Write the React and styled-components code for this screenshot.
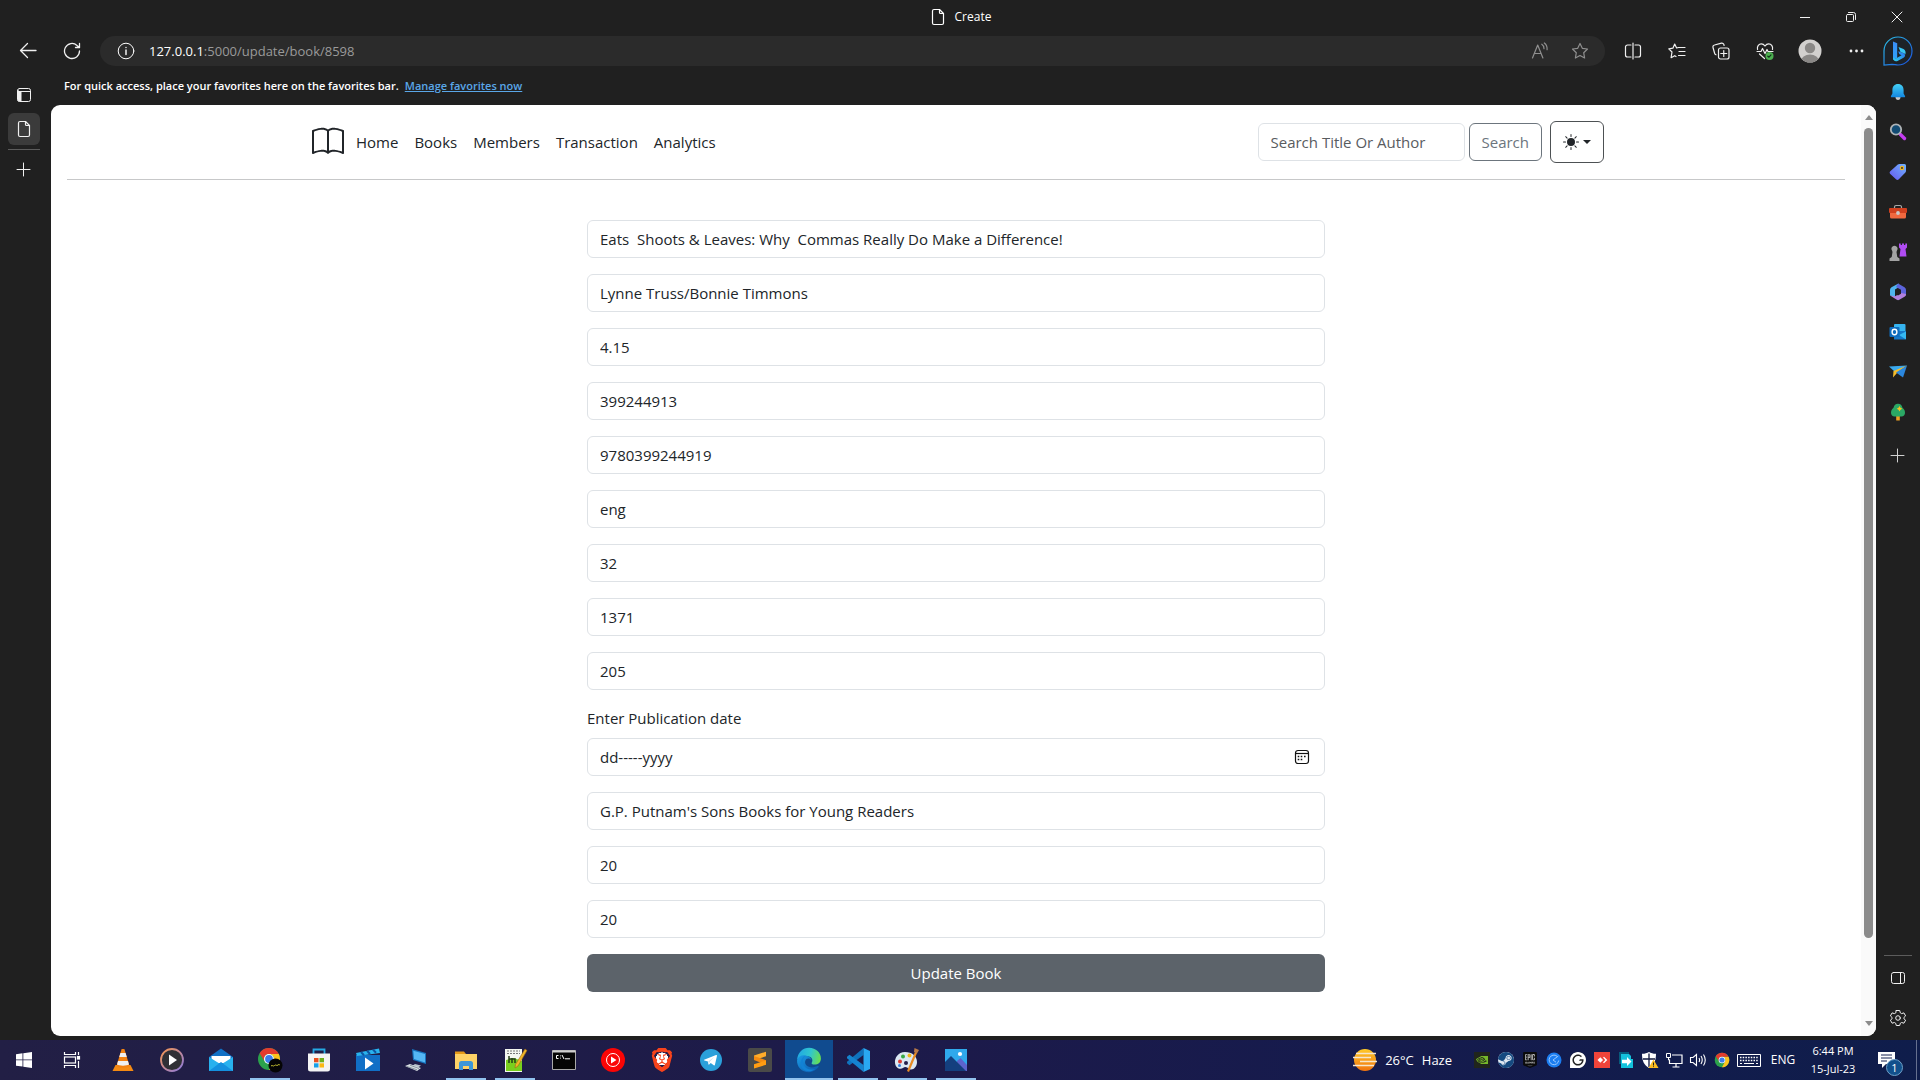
import React from "react";
import styled, { createGlobalStyle, css } from "styled-components";
import { BsBook, BsSunFill } from "react-icons/bs";
import { SiBrave, SiEpicgames, SiGrammarly, SiNvidia, SiSteam } from "react-icons/si";

const uiFont = `"Open Sans", "Noto Sans", sans-serif`;

const GlobalStyle = createGlobalStyle`
  *, *::before, *::after { box-sizing: border-box; }
  body { margin: 0; background: #202020; font-family: ${uiFont}; }
  button, input { font-family: inherit; }
  svg { display: block; flex: none; }
`;

/* ---------- browser frame ---------- */

const Desktop = styled.div`
  display: flex;
  flex-direction: column;
  min-height: 100vh;
  background: #202020;
  color: #fff;
`;

const TitleBar = styled.header`
  display: grid;
  grid-template-columns: 1fr auto 1fr;
  align-items: center;
  height: 33px;
`;

const PageTitle = styled.div`
  grid-column: 2;
  display: flex;
  align-items: center;
  gap: 8px;
  font-size: 12px;
  line-height: 16px;
`;

const WindowControls = styled.div`
  display: flex;
  justify-content: flex-end;
`;

const IconButton = styled.button`
  display: flex;
  align-items: center;
  justify-content: center;
  flex: none;
  width: ${(p) => p.$w || 44}px;
  height: ${(p) => p.$h || 32}px;
  padding: 0;
  border: 0;
  border-radius: 6px;
  background: ${(p) => (p.$active ? "#3b3b3b" : "transparent")};
  color: ${(p) => p.$tone || "#f0f0f0"};
`;

const Toolbar = styled.nav`
  display: flex;
  align-items: center;
  height: 36px;
  padding: 0 3px 0 6px;
`;

const AddressBar = styled.div`
  display: flex;
  align-items: center;
  flex: 1;
  min-width: 0;
  height: 30px;
  margin: 0 6px;
  padding: 0 5px 0 17px;
  border-radius: 15px;
  background: #2b2b2b;
`;

const Address = styled.div`
  flex: 1;
  margin-left: 14px;
  font-size: 13px;
  line-height: 20px;
  color: #9a9a9a;
  outline: 0;
`;

const Host = styled.span`
  color: #fff;
`;

const BrowserBody = styled.div`
  display: grid;
  grid-template-columns: 51px minmax(0, 1fr) 44px;
  flex: 1;
`;

const TabRail = styled.aside`
  display: flex;
  flex-direction: column;
  padding: 10px 11px 0 8px;
`;

const ActiveTab = styled(IconButton)`
  margin-top: 2px;
`;

const RailRule = styled.hr`
  width: ${(p) => p.$w}px;
  height: 1px;
  margin: ${(p) => p.$m};
  border: 0;
  background: #5c5c5c;
`;

const Center = styled.div`
  display: flex;
  flex-direction: column;
  padding-bottom: 4px;
`;

const FavoritesBar = styled.div`
  display: flex;
  align-items: center;
  gap: 6px;
  height: 36px;
  padding: 0 0 2px 13px;
  font-size: 11px;
  font-weight: 600;
  line-height: 16px;
`;

const FavoritesLink = styled.a`
  color: #5aa7e8;
  text-decoration: underline;
`;

const SideBar = styled.aside`
  display: flex;
  flex-direction: column;
  align-items: center;
  padding: 3px 0 2px;
`;

const SideBottom = styled.div`
  display: flex;
  flex-direction: column;
  align-items: center;
  margin-top: auto;
`;

/* ---------- web page ---------- */

const Viewport = styled.div`
  display: flex;
  flex: 1;
  overflow: hidden;
  border-radius: 9px;
  background: #fff;
  color: #212529;
`;

const Page = styled.main`
  flex: 1;
  min-width: 0;
  padding: 16px 16px 0;
  font-size: 15px;
  line-height: 24px;
`;

const NavContainer = styled.div`
  display: flex;
  align-items: center;
  max-width: 1320px;
  margin: 0 auto;
  padding: 0 12px 0 16px;
`;

const Brand = styled.a`
  margin-right: 4px;
  color: #212529;
`;

const NavLink = styled.a`
  padding: 8px;
  color: #212529;
  text-decoration: none;
`;

const SearchForm = styled.form`
  display: flex;
  gap: 4px;
  margin: 0 8px 0 auto;
`;

const field = css`
  height: 38px;
  padding: 6px 12px;
  border: 1px solid #dee2e6;
  border-radius: 6px;
  background: #fff;
  color: #212529;
  font-size: 15px;
  line-height: 24px;
`;

const SearchInput = styled.input`
  ${field}
  width: 207px;
  &::placeholder { color: #595c5f; opacity: 1; }
`;

const OutlineButton = styled.button`
  height: 38px;
  padding: 0 12px;
  border: 1px solid #6c757d;
  border-radius: 6px;
  background: #fff;
  color: #6c757d;
  font-size: 15px;
  line-height: 24px;
`;

const ThemeButton = styled.button`
  display: flex;
  align-items: center;
  justify-content: center;
  gap: 4px;
  width: 54px;
  height: 42px;
  padding: 0;
  border: 1px solid #4d5154;
  border-radius: 6px;
  background: #fff;
  color: #212529;
`;

const Caret = styled.span`
  border: 4px solid transparent;
  border-top-color: #212529;
  border-bottom: 0;
`;

const PageRule = styled.hr`
  height: 1px;
  margin: 16px 0 40px;
  border: 0;
  background: #c7c8c9;
`;

const BookForm = styled.form`
  display: flex;
  flex-direction: column;
  gap: 16px;
  max-width: 738px;
  margin: 0 auto;
`;

const TextField = styled.input`
  ${field}
  width: 100%;
`;

const DateGroup = styled.div`
  display: flex;
  flex-direction: column;
  gap: 8px;
`;

const DateBox = styled.div`
  ${field}
  display: flex;
  align-items: center;
  justify-content: space-between;
`;

const DateInput = styled.input`
  flex: 1;
  padding: 0;
  border: 0;
  outline: 0;
  background: none;
  color: #212529;
  font-size: 15px;
  line-height: 24px;
`;

const SubmitButton = styled.button`
  height: 38px;
  border: 0;
  border-radius: 6px;
  background: #5c636a;
  color: #fff;
  font-size: 15px;
  line-height: 24px;
`;

const ScrollTrack = styled.div`
  display: flex;
  flex-direction: column;
  align-items: center;
  width: 15px;
  padding: 10px 0;
  background: #fafafa;
`;

const ScrollArrow = styled.span`
  border: 4px solid transparent;
  ${(p) =>
    p.$up
      ? css`border-top: 0; border-bottom: 5px solid #8b8b8b;`
      : css`border-bottom: 0; border-top: 5px solid #8b8b8b;`}
`;

const ScrollLane = styled.div`
  display: flex;
  flex: 1;
  flex-direction: column;
  margin: 8px 0 9px;
  &::after { content: ""; flex: 1; }
`;

const ScrollThumb = styled.div`
  flex: 11;
  width: 9px;
  border-radius: 5px;
  background: #8b8b8b;
`;

/* ---------- taskbar ---------- */

const TaskBar = styled.footer`
  display: flex;
  height: 40px;
  background: linear-gradient(90deg, #221f45 0%, #1c1a4a 50%, #151b4d 72%, #0f1d4b 100%);
`;

const AppRow = styled.div`
  display: flex;
  gap: 1px;
  margin-left: 3px;
`;

const TaskButton = styled.button`
  display: flex;
  align-items: center;
  justify-content: center;
  position: relative;
  width: 48px;
  height: 40px;
  padding: 0;
  border: 0;
  background: ${(p) => (p.$active ? "#104b8f" : "transparent")};
  &::after {
    content: "";
    display: ${(p) => (p.$running || p.$active ? "block" : "none")};
    position: absolute;
    bottom: 0;
    left: ${(p) => (p.$active ? 0 : 4)}px;
    right: ${(p) => (p.$active ? 0 : 4)}px;
    height: 2px;
    background: #92c3ee;
  }
`;

const Tray = styled.div`
  display: flex;
  align-items: center;
  margin-left: auto;
  font-size: 13px;
  line-height: 18px;
`;

const Weather = styled.div`
  display: flex;
  align-items: center;
  gap: 8px;
  margin-right: 18px;
`;

const TrayIcons = styled.div`
  display: flex;
  align-items: center;
`;

const TraySlot = styled.span`
  display: flex;
  justify-content: center;
  width: ${(p) => p.$w || 24}px;
`;

const Language = styled.span`
  width: 38px;
  font-size: 12px;
  text-align: center;
`;

const Clock = styled.div`
  width: 62px;
  font-size: 11px;
  text-align: center;
`;

const Notifications = styled.div`
  position: relative;
  margin: 0 21px 0 14px;
`;

const Badge = styled.span`
  position: absolute;
  top: 7px;
  left: 8px;
  width: 17px;
  height: 17px;
  border: 1px solid #6fa0c8;
  border-radius: 50%;
  background: #11508c;
  font-size: 11px;
  line-height: 15px;
  text-align: center;
`;

const ShowDesktop = styled.div`
  width: 4px;
  height: 40px;
  border-left: 1px solid #66708f;
`;

/* ---------- line icons ---------- */

function Line({ s = 16, w = 1, box = 16, children }) {
  return (
    <svg width={s} height={s} viewBox={`0 0 ${box} ${box}`} fill="none" stroke="currentColor" strokeWidth={w} strokeLinecap="round" strokeLinejoin="round">
      {children}
    </svg>
  );
}

const DocIcon = () => (
  <Line s={18} box={18} w={1.2}>
    <path d="M5 1.5h5.5l4 4V15a1.5 1.5 0 0 1-1.500 1.500H5A1.500 1.500 0 0 1 3.500 15V3A1.500 1.500 0 0 1 5 1.500z" />
    <path d="M10.500 1.500v3a1 1 0 0 0 1 1h3" />
  </Line>
);
const BackIcon = () => <Line s={18} box={18} w={1.3}><path d="M17 8.500H1.500M8.500 1.500l-7 7 7 7" /></Line>;
const ReloadIcon = () => (
  <Line s={18} box={18} w={1.3}>
    <path d="M16.500 9A7.500 7.500 0 1 1 14 3.400L16.500 5.500M16.500 1.500v4h-4" />
  </Line>
);
const InfoIcon = () => (
  <Line s={18} box={18}>
    <circle cx="9" cy="9" r="7.800" />
    <path d="M9 8v4.500M9 5.400v.2" strokeWidth="1.400" />
  </Line>
);
const ReadAloudIcon = () => (
  <Line s={18} box={18} w={1.2}>
    <path d="M1.500 16L6.700 3l5.200 13M3.300 11.500h6.800M10.800 2.200c1.600 1 2.300 2.500 2.200 4.500M13.300 1c2.200 1.600 3 3.800 2.800 6.700" />
  </Line>
);
const StarIcon = () => (
  <Line s={18} box={18} w={1.2}>
    <path d="M9 1.500l2.300 4.800 5.200.7-3.800 3.700.9 5.300L9 13.500 4.400 16l.9-5.300L1.500 7l5.200-.7z" />
  </Line>
);
const SplitIcon = () => (
  <Line s={18} box={18} w={1.2}>
    <path d="M7 3H3.500A2 2 0 0 0 1.500 5v8a2 2 0 0 0 2 2H7M11 3h3.500a2 2 0 0 1 2 2v8a2 2 0 0 1-2 2H11M9 1v16" />
  </Line>
);
const FavoritesIcon = () => (
  <Line s={18} box={18} w={1.2}>
    <path d="M10.500 5.500L8.600 6 6.700 2 4.900 6.200.8 6.800 4 10l-.9 5.700 3.600-2 1.300.8M10.500 5.500H17M11 9.500h6M10.500 13.500H17" />
  </Line>
);
const CollectionsIcon = () => (
  <Line s={18} box={18} w={1.2}>
    <rect x="6.500" y="6" width="10.500" height="11" rx="2" />
    <path d="M11.750 8.500v6M8.750 11.500h6M4 12.800A2 2 0 0 1 2.700 11.500L1 5.500A2 2 0 0 1 2.500 3L9.500 1.200a2 2 0 0 1 2.400 1.500L12.100 3.500" />
  </Line>
);
const HeartIcon = () => (
  <Line s={18} box={18} w={1.2}>
    <path d="M1.500 7.500C.8 4 3 1.800 5.300 1.800 7.300 1.800 8.300 3 9 4c.7-1 1.700-2.200 3.700-2.200 2.300 0 4.500 2.200 3.800 5.700M1 9.500h4l1.500-3 2.500 5 2-4 1 2h5M3.500 12L8.500 16.500" />
    <circle cx="13.500" cy="14" r="4" fill="#4caf50" stroke="none" />
    <path d="M11.800 14.200l1.200 1 2-2.300" stroke="#12351a" />
  </Line>
);
const AvatarIcon = () => (
  <svg width="24" height="24" viewBox="0 0 24 24">
    <defs><clipPath id="avatarClip"><circle cx="12" cy="12" r="11.500" /></clipPath></defs>
    <circle cx="12" cy="12" r="11.500" fill="#d2d0ce" />
    <g clipPath="url(#avatarClip)" fill="#8a8886">
      <circle cx="12" cy="9" r="5.200" />
      <ellipse cx="12" cy="22" rx="9" ry="6.500" />
    </g>
  </svg>
);
const DotsIcon = () => (
  <svg width="16" height="16" fill="currentColor"><circle cx="3" cy="8" r="1.400" /><circle cx="8.500" cy="8" r="1.400" /><circle cx="14" cy="8" r="1.400" /></svg>
);
const BingIcon = () => (
  <svg width="30" height="30" viewBox="0 0 30 30">
    <defs>
      <linearGradient id="bingRing" x1="0" y1="0" x2="1" y2="1"><stop offset="0" stopColor="#2cc3e8" /><stop offset="1" stopColor="#1a50e0" /></linearGradient>
      <linearGradient id="bingStem" x1="0" y1="0" x2="0" y2="1"><stop offset="0" stopColor="#3a8cf5" /><stop offset="1" stopColor="#2ea3fa" /></linearGradient>
      <linearGradient id="bingTail" x1="0" y1="1" x2="1" y2="0"><stop offset="0" stopColor="#2fd3ee" /><stop offset="1" stopColor="#286ef0" /></linearGradient>
    </defs>
    <path d="M1 29V15a14 14 0 1 1 14 14c-2 0-4-.6-6-.6L1 29z" fill="#1d2228" stroke="url(#bingRing)" strokeWidth="1.200" />
    <path d="M10 5.500l4.200 1.700v14.500L10 24z" fill="url(#bingStem)" />
    <path d="M10 21.500c1.500 1.500 3 1 4.200.2l4.300-2.500-2.300-1.200-1-2.800 5 1.800c2.600 1 2.300 3.600.3 4.800L14.500 25c-2.500 1-4.500-.6-4.500-3.500z" fill="url(#bingTail)" />
    <path d="M15.500 11l5 2c2 1 2.600 3.500 1.800 5.500-.5-.8-1.200-1.300-2-1.600L17.500 16z" fill="#38c6f4" />
  </svg>
);
const PanelTabsIcon = () => (
  <Line>
    <rect x="1.500" y="1.500" width="13" height="13" rx="2" />
    <path d="M1.500 4.500h13" />
    <path d="M2 3.500v9.500a1 1 0 0 0 1 1h2V4.500H2z" fill="currentColor" />
  </Line>
);
const PlusIcon = () => <Line><path d="M7.500 1v13M1 7.500h13" /></Line>;
const SidePanelIcon = () => <Line><rect x="1.500" y="2.500" width="13" height="11" rx="2" /><path d="M10.500 2.500v11" /></Line>;
const GearIcon = () => (
  <Line s={18} box={18}>
    <path d="M7.300 1.500h3.400l.6 2.300 1.300.8 2.300-.7 1.700 3-1.700 1.600v1.200l1.700 1.500-1.700 3-2.300-.7-1.300.8-.6 2.200H7.300l-.6-2.200-1.300-.8-2.300.7-1.700-3 1.700-1.500V8.500L1.400 6.900l1.700-3 2.300.7 1.300-.8z" />
    <circle cx="9" cy="9" r="2.300" />
  </Line>
);
const MinimizeIcon = () => <Line s={10} box={10}><path d="M0 5.500h10" /></Line>;
const RestoreIcon = () => <Line s={12} box={12}><rect x="1.500" y="3.500" width="7" height="7" rx="1" /><path d="M3.500 1.500H8.500a2 2 0 0 1 2 2V8.500" /></Line>;
const CloseIcon = () => <Line s={12} box={12}><path d="M1 1l10 10M11 1L1 11" /></Line>;
const CalendarIcon = () => (
  <svg width="16" height="16" viewBox="0 0 16 16" fill="none" stroke="#111" strokeWidth="1.200">
    <rect x="1.500" y="1.500" width="13" height="13" rx="2.500" />
    <path d="M1.500 4.500h13" />
    <path d="M6.700 7.500h1.600M10 7.500h1.600M3.700 7.500h1.600M3.700 10.500h1.600M6.700 10.500h1.600" strokeWidth="1.600" />
  </svg>
);

/* ---------- sidebar icons ---------- */

const Art = ({ s = 18, box = 18, children }) => <svg width={s} height={s} viewBox={`0 0 ${box} ${box}`}>{children}</svg>;

const Bell = () => (
  <Art>
    <defs><linearGradient id="bellBody" x1="0" y1="0" x2="0" y2="1"><stop offset="0" stopColor="#45d0f5" /><stop offset="1" stopColor="#1286e0" /></linearGradient></defs>
    <path d="M6.500 14h5c0 2-1 3-2.500 3s-2.500-1-2.500-3z" fill="#c9c9c9" />
    <path d="M9 1c3.500 0 5.600 2.500 5.600 6v3.500L16 13c.3.800 0 1.300-.8 1.300H2.800C2 14.300 1.700 13.800 2 13l1.400-2.500V7C3.400 3.500 5.500 1 9 1z" fill="url(#bellBody)" />
  </Art>
);
const Magnifier = () => (
  <Art>
    <path d="M11.500 11.500l4 4" stroke="#c43cf0" strokeWidth="3.400" strokeLinecap="round" />
    <circle cx="7" cy="6.500" r="5.200" fill="#124b73" stroke="#aeb3b6" strokeWidth="1.800" />
  </Art>
);
const Tag = () => (
  <Art>
    <defs><linearGradient id="tagBody" x1="1" y1="0" x2="0" y2="1"><stop offset="0" stopColor="#6fb3ff" /><stop offset="1" stopColor="#6657ee" /></linearGradient></defs>
    <path d="M10.500 1H15.500A1.500 1.500 0 0 1 17 2.500V8a2 2 0 0 1-.6 1.400L9.800 16.300a2 2 0 0 1-2.800 0L1.300 11a2 2 0 0 1 0-2.800L8.800 1.600A2.500 2.500 0 0 1 10.500 1z" fill="url(#tagBody)" />
    <circle cx="13" cy="5" r="1.600" fill="#343434" stroke="#f5b91c" strokeWidth="1.200" />
  </Art>
);
const Toolbox = () => (
  <Art>
    <path d="M5.500 5.500V4A1.500 1.500 0 0 1 7 2.500h4A1.500 1.500 0 0 1 12.500 4v1.500" fill="none" stroke="#a8a8a8" strokeWidth="1.200" />
    <rect x="0" y="5" width="18" height="5" rx="1" fill="#d0401f" />
    <path d="M1 10h16v4a1.500 1.500 0 0 1-1.500 1.500h-13A1.500 1.500 0 0 1 1 14z" fill="#f0683f" />
    <circle cx="9" cy="10" r="1.900" fill="#c8c8c8" />
  </Art>
);
const Chess = () => (
  <Art>
    <path d="M10 .5h1.700V2h1.300V.5h2V2h1.300V.5H18v4L16.500 6l1 7.500h-7l1-7.500L10 4.500z" fill="#b04cf2" />
    <path d="M3 7.500a3 3 0 1 1 5 0L7.500 9l.8 5 2.200 1.500V18H.5v-2.500L2.700 14l.8-5z" fill="#a3a3a3" />
  </Art>
);
const Office = () => (
  <Art>
    <path d="M9.500.500L2.500 4.300A3 3 0 0 0 1 7v5.500l5 1.500V6.500l5-3z" fill="#4fb4ee" />
    <path d="M9 .500L15.500 4.300A3 3 0 0 1 17 7v5.500L12 11V6.800L7 4z" fill="#5c64dc" />
    <path d="M1 12.500l6.800 4.300a2.500 2.500 0 0 0 2.500 0l5.200-3.100c1-.6 1.500-1.200 1.500-2.700l-5-1-6 3.300z" fill="#b180de" />
    <path d="M9 5.700l3 1.700v3.400L9 12.500l-3-1.700V7.400z" fill="#202020" />
  </Art>
);
const Outlook = () => (
  <Art>
    <rect x="5" y="1" width="11.500" height="10" rx="1" fill="#36b4f0" />
    <path d="M5 8h12v7.500a1 1 0 0 1-1 1H5z" fill="#1477c8" />
    <path d="M17 8.500v8L10 12z" fill="#35b8f1" />
    <rect x="0.500" y="4" width="10" height="10" rx="1" fill="#0f6cbd" />
    <ellipse cx="5.500" cy="9" rx="2.400" ry="2.700" fill="none" stroke="#fff" strokeWidth="1.400" />
  </Art>
);
const Plane = () => (
  <Art>
    <path d="M0 3.500l18-1L6 9z" fill="#3aa9ee" />
    <path d="M18 2.500L4.500 8 4 14.500 8 10z" fill="#f5bd2c" />
    <path d="M18 2.500L7 9.500l7 5z" fill="#2b87de" />
  </Art>
);
const Tree = () => (
  <Art>
    <rect x="7.200" y="12" width="3.600" height="5.500" rx="0.500" fill="#eda022" />
    <path d="M9 .800c2.500 0 3.800 1.500 4.500 4C15.500 6.500 16 8 16 10c0 2-1.500 3.400-3.500 3.400h-7C3.500 13.400 2 12 2 10c0-2 .5-3.500 2.500-5.200.7-2.500 2-4 4.500-4z" fill="#2ba865" />
    <path d="M10.500 3l1 1.700 1.800 1-1.800 1-1 1.800-1-1.800-1.800-1 1.800-1z" fill="#f7c325" />
  </Art>
);

/* ---------- taskbar icons ---------- */

const Start = () => (
  <svg width="16" height="16" viewBox="0 0 16 16" fill="#fff">
    <path d="M0 2.200l6.500-.9v6.200H0zM7.300 1.200L16 0v7.500H7.300zM0 8.300h6.500v6.300L0 13.700zM7.300 8.300H16V16l-8.700-1.200z" />
  </svg>
);
const TaskView = () => (
  <svg width="18" height="18" viewBox="0 0 18 18" fill="none" stroke="#fff" strokeWidth="1.200">
    <path d="M1.500 1v2.500h11V1M1.500 17v-2.500h11V17M15.500 1v3M15.500 10v7" />
    <rect x="1.500" y="6" width="11" height="6" />
    <rect x="14.500" y="5.500" width="2" height="2.500" fill="#fff" />
  </svg>
);
const Vlc = () => (
  <Art s={24} box={24}>
    <path d="M4.500 17h15l3 6h-21z" fill="#f58a12" />
    <path d="M10.600 1h2.800l5.100 17c-2 2.200-11 2.200-13 0z" fill="#f28111" />
    <path d="M9.400 5h5.200l1.200 4H8.200zM7 13h10l1 3.500c-2 1.500-10 1.500-12 0z" fill="#efefef" />
  </Art>
);
const MediaPlayer = () => (
  <Art s={24} box={24}>
    <defs><linearGradient id="playRing" x1="0" y1="0" x2="1" y2="1"><stop offset="0" stopColor="#f6964f" /><stop offset="1" stopColor="#8b7be0" /></linearGradient></defs>
    <circle cx="12" cy="12" r="11" fill="#303035" stroke="url(#playRing)" strokeWidth="1.800" />
    <path d="M9 6.500l8 5.500-8 5.500z" fill="#fff" />
  </Art>
);
const Mail = () => (
  <Art s={24} box={24}>
    <path d="M0 9L12 .500 24 9v14H0z" fill="#1170c5" />
    <path d="M2.500 8h19v7h-19z" fill="#fff" />
    <path d="M0 9l12 7.500L24 9v14H0z" fill="#28b1ee" />
    <path d="M0 23L12 14l12 9z" fill="#1490df" />
  </Art>
);
const ChromeMark = () => (
  <>
    <circle cx="24" cy="24" r="22" fill="#2ba24c" />
    <path d="M24 14H43.600A22 22 0 0 1 24 46L32.700 29A10 10 0 0 0 24 14z" fill="#fcc31e" />
    <path d="M24 14H43.600A22 22 0 0 0 5.200 12.500L15.300 29A10 10 0 0 1 24 14z" fill="#e33b2e" />
    <circle cx="24" cy="24" r="10" fill="#fff" />
    <circle cx="24" cy="24" r="7.800" fill="#3b7ded" />
  </>
);
const Chrome = () => (
  <Art s={26} box={52}>
    <ChromeMark />
    <circle cx="37" cy="37" r="14" fill="#050505" />
    <path d="M28 38c3-3 4 2 7-1s4 2 7-1 3 1 4 0" fill="none" stroke="#c7c332" strokeWidth="2" />
  </Art>
);
const ChromeSmall = () => <Art s={16} box={48}><ChromeMark /></Art>;
const Store = () => (
  <Art s={24} box={24}>
    <path d="M6.500 7V1.500h11V7" fill="none" stroke="#25a9e3" strokeWidth="1.800" />
    <path d="M1 5.500h22V21a2.500 2.500 0 0 1-2.500 2.500h-17A2.500 2.500 0 0 1 1 21z" fill="#f4f4f4" />
    <path d="M7 10h4.500v4.300H7z" fill="#e8501f" /><path d="M12.500 10H17v4.300h-4.500z" fill="#6fb01c" />
    <path d="M7 15.300h4.500v4.200H7z" fill="#16a0e8" /><path d="M12.500 15.300H17v4.200h-4.500z" fill="#fab813" />
  </Art>
);
const Movies = () => (
  <Art s={24} box={24}>
    <path d="M0 7h24v16H0z" fill="#116fc6" />
    <path d="M0 5l23-4.500 1 4.500L1 8z" fill="#29b3ee" />
    <path d="M5 4l3 3.200M11 2.800l3 3.200M17 1.600l3 3.200" stroke="#0d55a3" strokeWidth="2" />
    <path d="M9 9.500l8.500 6L9 21.500z" fill="#fff" />
  </Art>
);
const Computer = () => (
  <Art s={24} box={24}>
    <path d="M7 1l14 4v11L8 12z" fill="#1773bd" /><path d="M8.300 2.700L20 6v8.500L9 11z" fill="#54b7f4" />
    <path d="M10 16l6 1.500-3 2-6-1.500z" fill="#b7c2ca" /><path d="M0 18l5-2 11 4-4 3z" fill="#d9dfe3" />
    <path d="M2 18.500l10 3.300M5 17.200l9 3.300" stroke="#74828d" strokeWidth="0.800" />
  </Art>
);
const Explorer = () => (
  <Art s={24} box={24}>
    <path d="M1 3.500h9l2 2.500H1z" fill="#e59a18" /><path d="M1 6h22v15H1z" fill="#fdd266" />
    <path d="M5 22v-6.500A2.500 2.500 0 0 1 7.500 13h9a2.500 2.500 0 0 1 2.500 2.500V22h-4v-4H9v4z" fill="#3c96d8" />
  </Art>
);
const Notepad = () => (
  <Art s={26} box={26}>
    <path d="M3 2h17v23H3z" fill="#f4f7f0" /><path d="M4 13l8-2 8 3v10H4z" fill="#79cf1d" />
    <path d="M5 4h13M5 6.500h13" stroke="#777" strokeDasharray="2 1" /><path d="M7 9v7M10 11v5M7 12h6v4" stroke="#243f16" strokeWidth="1.500" fill="none" />
    <path d="M23 2l2 1.500L16 19l-3 2 .5-3.500z" fill="#efb528" stroke="#9c6a18" strokeWidth="0.600" />
  </Art>
);
const Terminal = () => (
  <Art s={24} box={24}>
    <path d="M.500 2.500h23v19H.500z" fill="#050505" stroke="#a9a9a9" /><path d="M.500 2.500h23v2H.500z" fill="#cfcfcf" />
    <path d="M6.500 7.500H4.500v3h2M8.500 7.500v.8M8.500 9.700v.8M10 7l2 4M13 10.800h5" stroke="#fff" fill="none" />
  </Art>
);
const YtMusic = () => (
  <Art s={24} box={24}>
    <circle cx="12" cy="12" r="12" fill="#fa0505" /><circle cx="12" cy="12" r="6.500" fill="none" stroke="#fff" />
    <path d="M10 8.500l5.500 3.500-5.500 3.500z" fill="#fff" />
  </Art>
);
const BraveStack = styled.span`
  display: flex;
  background: radial-gradient(circle at 50% 45%, #fff 0 35%, transparent 36%);
`;
const Brave = () => <BraveStack><SiBrave size={24} color="#f8431b" /></BraveStack>;
const Telegram = () => (
  <Art s={22} box={24}>
    <circle cx="12" cy="12" r="12" fill="#2ba0da" /><path d="M4.500 11.800l13-5.300c.8-.3 1.200.2 1 1l-2.200 9.800c-.2.700-.7.900-1.300.5l-3.300-2.400-1.700 1.600c-.4.300-.7.200-.8-.3l-.6-3.200-3.800-.9c-.7-.2-.8-.6-.3-.8z" fill="#fff" />
    <path d="M9 13.500l6.500-4.800-5 5.200-.5 2.500z" fill="#c3ddec" />
  </Art>
);
const Sublime = () => (
  <Art s={24} box={24}>
    <rect width="24" height="24" rx="2" fill="#4a4a48" /><path d="M6 7.500l12-3.800v4.600L6 12z" fill="#ffad2a" /><path d="M6 8l12 4.300v4.500L6 12z" fill="#f48b10" /><path d="M6 16.300l12-3.900v4.400l-12 3.700z" fill="#ff9d12" />
  </Art>
);
const Edge = () => (
  <Art s={26} box={48}>
    <defs>
      <linearGradient id="edgeTop" x1="0" y1="0.300" x2="1" y2="0.500"><stop offset="0" stopColor="#20a7e4" /><stop offset="0.550" stopColor="#31c6cd" /><stop offset="1" stopColor="#68de51" /></linearGradient>
      <linearGradient id="edgeLow" x1="0" y1="0" x2="1" y2="1"><stop offset="0" stopColor="#1b9de6" /><stop offset="1" stopColor="#0b55aa" /></linearGradient>
    </defs>
    <path d="M2 24C3 10 13 1.500 24 1.500 37 1.500 46 11 46 21c0 7-5 11.500-12 11.500-4 0-6-1.500-5-3.500 3-4 1-12-8-12C11 17 4 20 2 24z" fill="url(#edgeTop)" />
    <path d="M2 24c2-7 9-10 16-8.500 6 1 10 4.500 10.500 9C25 20 19 20 17 26c-2 8 8 15 20 10 4-2 6-1 4 2-4 5-10 8.500-17 8.500C11 46.500 1 37 2 24z" fill="url(#edgeLow)" />
    <path d="M18 16c-6 4-7 13-2 20 4 6 12 7 20 4-5 4-12 6-18 4C9 41 7 31 10 24c2-4 4-7 8-8z" fill="#1282d5" />
  </Art>
);
const VsCode = () => (
  <Art s={24} box={24}>
    <path d="M17.500 0v7L3.500 17.300 1 15.300v-1.500z" fill="#0f72bd" />
    <path d="M1 8.700l2.500-2L17.500 17v7L1 10.200z" fill="#1583cf" />
    <path d="M17.500 0L24 3v18l-6.500 3z" fill="#29a8f2" />
  </Art>
);
const Paint = () => (
  <Art s={26} box={26}>
    <path d="M11 5C4 5 .5 11 1 16c.5 5 5 7 8 5 2-2 4-1 6 1 4 2 8-2 8-7 0-6-5-10-12-10z" fill="#dce8f2" />
    <circle cx="12" cy="16" r="2" fill="#241f4a" /><circle cx="6" cy="14.500" r="2" fill="#df3b32" /><circle cx="9" cy="9.500" r="2" fill="#38a946" /><circle cx="15.500" cy="8.500" r="2" fill="#f3b71d" /><circle cx="5.500" cy="18.500" r="1.500" fill="#337ddc" />
    <path d="M21 5l2 1-8 19-2-1z" fill="#e88b23" /><path d="M20.500 1l4.500 2-2 3.500-3-1.500z" fill="#b87947" />
  </Art>
);
const Photos = () => (
  <Art s={24} box={24}>
    <path d="M1 1h22v22H1z" fill="#2fa9ec" /><path d="M13 13l3.500-3 6.500 7v6H13z" fill="#5c63cc" /><path d="M1 14l6-6 15 15H1z" fill="#143f7e" /><circle cx="16" cy="6" r="2.100" fill="#fff" />
  </Art>
);
const Haze = () => (
  <Art s={24} box={24}>
    <defs><linearGradient id="sunFill" x1="0" y1="0" x2="0" y2="1"><stop offset="0" stopColor="#ffc928" /><stop offset="1" stopColor="#f0730f" /></linearGradient></defs>
    <circle cx="12" cy="12" r="11" fill="url(#sunFill)" />
    <path d="M3 5.500h20M0 9.500h18M7 13.500h17M0 17.500h21" stroke="#f5e5ce" strokeWidth="1.500" />
  </Art>
);

/* ---------- tray icons ---------- */

const Plate = styled.span`
  display: flex;
  align-items: center;
  justify-content: center;
  width: ${(p) => p.$s || 16}px;
  height: ${(p) => p.$h || 16}px;
  border-radius: ${(p) => p.$r || 0};
  background: ${(p) => p.$bg};
`;
const Clocky = () => <Art s={16} box={16}><circle cx="8" cy="8" r="7.500" fill="#1b7df0" /><path d="M11 4.200A4.800 4.800 0 1 0 12.700 8.500M12.300 4L7 8l3 2.200" fill="none" stroke="#a9d0ff" strokeWidth="0.900" /></Art>;
const AnyDesk = () => <Art s={16} box={16}><path d="M0 0h16v16H0z" fill="#f1443a" /><path d="M3.500 8L6.300 5.200 9.100 8l-2.800 2.800z" fill="#fff" /><path d="M9 5.500l1-.8L13.300 8 10 11.300l-1-.8L11.200 8z" fill="#fff" /></Art>;
const Transfer = () => <Art s={16} box={16}><path d="M1 0h10v12H1z" fill="#075a7c" /><path d="M3 2h8l2 2v3h2v9H3z" fill="#13c1dc" /><path d="M4 7.800h5V5l4.500 4.500L9 14v-2.800H4z" fill="#fff" /></Art>;
const Shield = () => (
  <Art s={18} box={18}>
    <path d="M8 1c2 1.200 4 1.800 7 1.800C15 10 13 14 8 17 3 14 1 10 1 2.800 4 2.800 6 2.200 8 1z" fill="#fff" />
    <path d="M8 2.500V16M2 8h12" stroke="#10183f" strokeWidth="1.300" />
    <path d="M12.500 8.500l5 8.500h-10z" fill="#fbbb21" /><path d="M12.500 11.500v3M12.500 15.300v.8" stroke="#222" />
  </Art>
);
const Network = () => <Art s={18} box={18}><path d="M7 4h10v8.500H4.500V8.500M11 12.500V16M7.500 16h7" fill="none" stroke="#fff" strokeWidth="1.200" /><path d="M1.500 2.500h4v4h-4zM3.500 6.500V9h1" fill="none" stroke="#fff" /></Art>;
const Speaker = () => <Art s={18} box={18}><path d="M1.500 6.500h2.500l3.500-3v11L4 11.500H1.500zM10 7q1.200 2 0 4M12 5q2.500 4 0 8M14.500 3.500q3.500 5.500 0 11" fill="none" stroke="#fff" strokeWidth="1.100" /></Art>;
const Keyboard = () => (
  <svg width="24" height="16" viewBox="0 0 24 16" fill="none" stroke="#fff">
    <path d="M.500 2.500h23v12H.500z" /><path d="M3 5.500h18M3 8.500h18" strokeDasharray="1.500 1.200" strokeWidth="1.300" /><path d="M3 11.500h2M7 11.500h10M19 11.500h2" />
  </svg>
);
const Message = () => <svg width="17" height="17" viewBox="0 0 17 17"><path d="M0 0h17v12H8l-4 4v-4H0z" fill="#fff" /><path d="M3 3h11M3 6h11M3 9h6" stroke="#15214f" /></svg>;

/* ---------- content ---------- */

const navItems = ["Home", "Books", "Members", "Transaction", "Analytics"];

const bookFields = [
  ["Title", "Eats  Shoots & Leaves: Why  Commas Really Do Make a Difference!"],
  ["Authors", "Lynne Truss/Bonnie Timmons"],
  ["Average rating", "4.15"],
  ["ISBN", "399244913"],
  ["ISBN 13", "9780399244919"],
  ["Language", "eng"],
  ["Pages", "32"],
  ["Ratings count", "1371"],
  ["Text reviews count", "205"],
];

const stockFields = [
  ["Publisher", "G.P. Putnam's Sons Books for Young Readers"],
  ["Total quantity", "20"],
  ["Available quantity", "20"],
];

const sideApps = [
  ["Notifications", Bell],
  ["Search", Magnifier],
  ["Shopping", Tag],
  ["Tools", Toolbox],
  ["Games", Chess],
  ["Microsoft 365", Office],
  ["Outlook", Outlook],
  ["Drop", Plane],
  ["Tree", Tree],
];

const taskApps = [
  ["VLC", Vlc], ["Media Player", MediaPlayer], ["Mail", Mail], ["Chrome", Chrome, "running"],
  ["Store", Store], ["Movies", Movies], ["This PC", Computer], ["Explorer", Explorer, "running"],
  ["Notepad++", Notepad, "running"], ["Command Prompt", Terminal], ["YouTube Music", YtMusic],
  ["Brave", Brave], ["Telegram", Telegram], ["Sublime Text", Sublime], ["Edge", Edge, "active"],
  ["Visual Studio Code", VsCode, "running"], ["Paint", Paint, "running"], ["Photos", Photos, "running"],
];

export default function App() {
  const stop = (e) => e.preventDefault();
  return (
    <Desktop>
      <GlobalStyle />
      <TitleBar>
        <PageTitle><DocIcon />Create</PageTitle>
        <WindowControls>
          <IconButton $w={46} aria-label="Minimize"><MinimizeIcon /></IconButton>
          <IconButton $w={46} aria-label="Restore"><RestoreIcon /></IconButton>
          <IconButton $w={46} aria-label="Close"><CloseIcon /></IconButton>
        </WindowControls>
      </TitleBar>

      <Toolbar>
        <IconButton aria-label="Back"><BackIcon /></IconButton>
        <IconButton aria-label="Refresh"><ReloadIcon /></IconButton>
        <AddressBar>
          <InfoIcon />
          <Address role="textbox" aria-label="Address" tabIndex={0}><Host>127.0.0.1</Host>:5000/update/book/8598</Address>
          <IconButton $w={40} $h={28} $tone="#8f8f8f" aria-label="Read aloud"><ReadAloudIcon /></IconButton>
          <IconButton $w={40} $h={28} $tone="#8f8f8f" aria-label="Add to favorites"><StarIcon /></IconButton>
        </AddressBar>
        <IconButton aria-label="Split screen"><SplitIcon /></IconButton>
        <IconButton aria-label="Favorites"><FavoritesIcon /></IconButton>
        <IconButton aria-label="Collections"><CollectionsIcon /></IconButton>
        <IconButton aria-label="Browser essentials"><HeartIcon /></IconButton>
        <IconButton $w={46} aria-label="Profile"><AvatarIcon /></IconButton>
        <IconButton $w={46} aria-label="Settings and more"><DotsIcon /></IconButton>
        <IconButton $w={38} aria-label="Bing"><BingIcon /></IconButton>
      </Toolbar>

      <BrowserBody>
        <TabRail>
          <IconButton $w={32} aria-label="Tab actions"><PanelTabsIcon /></IconButton>
          <ActiveTab $w={32} $active aria-label="Current tab"><DocIcon /></ActiveTab>
          <RailRule $w={32} $m="4px 0" />
          <IconButton $w={32} aria-label="New tab"><PlusIcon /></IconButton>
        </TabRail>

        <Center>
          <FavoritesBar>
            <span>For quick access, place your favorites here on the favorites bar.</span>
            <FavoritesLink href="#favorites">Manage favorites now</FavoritesLink>
          </FavoritesBar>
          <Viewport>
            <Page>
              <NavContainer>
                <Brand href="#home" aria-label="Library"><BsBook size={32} /></Brand>
                {navItems.map((n) => <NavLink key={n} href={`#${n.toLowerCase()}`}>{n}</NavLink>)}
                <SearchForm onSubmit={stop}>
                  <SearchInput aria-label="Search" placeholder="Search Title Or Author" />
                  <OutlineButton>Search</OutlineButton>
                </SearchForm>
                <ThemeButton aria-label="Theme"><BsSunFill size={16} /><Caret /></ThemeButton>
              </NavContainer>
              <PageRule />
              <BookForm onSubmit={stop}>
                {bookFields.map(([label, value]) => <TextField key={label} aria-label={label} defaultValue={value} />)}
                <DateGroup>
                  <label htmlFor="publication-date">Enter Publication date</label>
                  <DateBox>
                    <DateInput id="publication-date" defaultValue="dd-----yyyy" />
                    <IconButton type="button" $w={20} $h={20} aria-label="Open calendar"><CalendarIcon /></IconButton>
                  </DateBox>
                </DateGroup>
                {stockFields.map(([label, value]) => <TextField key={label} aria-label={label} defaultValue={value} />)}
                <SubmitButton>Update Book</SubmitButton>
              </BookForm>
            </Page>
            <ScrollTrack>
              <ScrollArrow $up />
              <ScrollLane><ScrollThumb /></ScrollLane>
              <ScrollArrow />
            </ScrollTrack>
          </Viewport>
        </Center>

        <SideBar>
          {sideApps.map(([name, Icon]) => <IconButton key={name} $w={40} $h={40} aria-label={name}><Icon /></IconButton>)}
          <IconButton $w={40} $h={48} $tone="#d0d0d0" aria-label="Customize"><PlusIcon /></IconButton>
          <SideBottom>
            <RailRule $w={28} $m="0 0 2px" />
            <IconButton $w={40} $h={40} aria-label="Hide sidebar"><SidePanelIcon /></IconButton>
            <IconButton $w={40} $h={40} aria-label="Settings"><GearIcon /></IconButton>
          </SideBottom>
        </SideBar>
      </BrowserBody>

      <TaskBar>
        <TaskButton aria-label="Start"><Start /></TaskButton>
        <TaskButton aria-label="Task view"><TaskView /></TaskButton>
        <AppRow>
          {taskApps.map(([name, Icon, state]) => (
            <TaskButton key={name} aria-label={name} $running={state === "running"} $active={state === "active"}><Icon /></TaskButton>
          ))}
        </AppRow>
        <Tray>
          <Weather><Haze /><span>26°C</span><span>Haze</span></Weather>
          <TrayIcons>
            <TraySlot><Plate $bg="#20251c"><SiNvidia size={12} color="#76b82a" /></Plate></TraySlot>
            <TraySlot><Plate $bg="#dfe8f2" $r="8px"><SiSteam size={16} color="#154a80" /></Plate></TraySlot>
            <TraySlot><Plate $bg="#b8b8b8" $s={10} $h={12}><SiEpicgames size={16} color="#0b0b0b" /></Plate></TraySlot>
            <TraySlot><Clocky /></TraySlot>
            <TraySlot><Plate $bg="#222" $r="8px"><SiGrammarly size={16} color="#fff" /></Plate></TraySlot>
            <TraySlot><AnyDesk /></TraySlot>
            <TraySlot><Transfer /></TraySlot>
            <TraySlot><Shield /></TraySlot>
            <TraySlot><Network /></TraySlot>
            <TraySlot><Speaker /></TraySlot>
            <TraySlot><ChromeSmall /></TraySlot>
            <TraySlot $w={30}><Keyboard /></TraySlot>
          </TrayIcons>
          <Language>ENG</Language>
          <Clock><div>6:44 PM</div><div>15-Jul-23</div></Clock>
          <Notifications><Message /><Badge>1</Badge></Notifications>
          <ShowDesktop />
        </Tray>
      </TaskBar>
    </Desktop>
  );
}
